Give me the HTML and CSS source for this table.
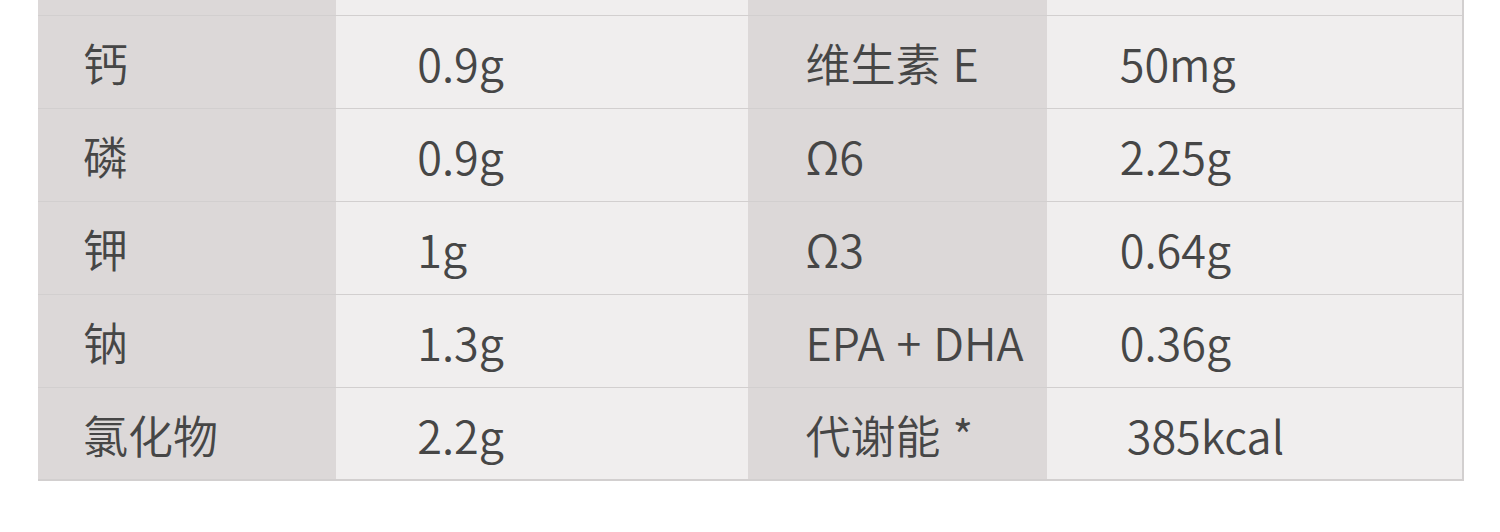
FILE: index.html
```html
<!DOCTYPE html>
<html lang="zh">
<head>
<meta charset="utf-8">
<link rel="stylesheet" href="styles.css">
</head>
<body>
<table class="nutri">
  <tr class="stub"><td class="k"></td><td class="v"></td><td class="k k2"></td><td class="v v2"></td></tr>
  <tr><td class="k">钙</td><td class="v">0.9g</td><td class="k k2">维生素&nbsp;E</td><td class="v v2">50mg</td></tr>
  <tr><td class="k">磷</td><td class="v">0.9g</td><td class="k k2">Ω6</td><td class="v v2">2.25g</td></tr>
  <tr><td class="k">钾</td><td class="v">1g</td><td class="k k2">Ω3</td><td class="v v2">0.64g</td></tr>
  <tr><td class="k">钠</td><td class="v">1.3g</td><td class="k k2">EPA + DHA</td><td class="v v2">0.36g</td></tr>
  <tr><td class="k">氯化物</td><td class="v">2.2g</td><td class="k k2">代谢能 *</td><td class="v v2 wide">385kcal</td></tr>
</table>
</body>
</html>
```
FILE: styles.css
```css
html, body {
  margin: 0;
  padding: 0;
  background: #ffffff;
}
body {
  font-family: "Noto Sans CJK SC", "Noto Sans", sans-serif;
  color: #464646;
}
.nutri {
  margin-left: 38px;
  border-collapse: collapse;
  table-layout: fixed;
  width: 1426px;
  font-size: 45px;
  font-weight: 350;
  line-height: 1;
  border-right: 2px solid #d2cfcf;
  border-bottom: 2px solid #d2cfcf;
}
.nutri td {
  height: 93px;
  padding: 2px 0 0 0;
  border-top: 1px solid #d2cfcf;
  vertical-align: middle;
  white-space: nowrap;
  box-sizing: border-box;
}
.nutri tr:first-child td {
  border-top: none;
}
.nutri .stub td {
  height: 15px;
  padding: 0;
}
.k {
  background: #dcd8d8;
  width: 298px;
  padding-left: 45px !important;
}
.v {
  background: #f0eeee;
  width: 412px;
  padding-left: 81px !important;
}
.k2 {
  padding-left: 57px !important;
  word-spacing: 2px;
}
.v2 {
  width: 416px;
  padding-left: 73px !important;
}
.v2.wide {
  padding-left: 80px !important;
}
```
